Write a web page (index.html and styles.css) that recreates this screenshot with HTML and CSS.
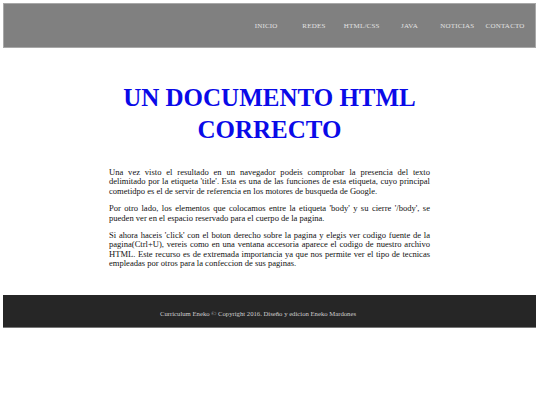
FILE: index.html
```html
<!DOCTYPE html>
<html lang="es">
<head>
<meta charset="utf-8">
<title>Curriculum Eneko</title>
<link rel="stylesheet" href="styles.css">
</head>
<body>
<header class="top">
  <nav class="menu">
    <a class="menu-item" href="#">INICIO</a>
    <a class="menu-item" href="#">REDES</a>
    <a class="menu-item" href="#">HTML/CSS</a>
    <a class="menu-item" href="#">JAVA</a>
    <a class="menu-item" href="#">NOTICIAS</a>
    <a class="menu-item" href="#">CONTACTO</a>
  </nav>
</header>
<main class="content">
  <h1 class="title">UN DOCUMENTO HTML<br>CORRECTO</h1>
  <p class="text">Una vez visto el resultado en un navegador podeis comprobar la presencia del texto delimitado por la etiqueta 'title'. Esta es una de las funciones de esta etiqueta, cuyo principal cometidpo es el de servir de referencia en los motores de busqueda de Google.</p>
  <p class="text">Por otro lado, los elementos que colocamos entre la etiqueta 'body' y su cierre '/body', se pueden ver en el espacio reservado para el cuerpo de la pagina.</p>
  <p class="text">Si ahora haceis 'click' con el boton derecho sobre la pagina y elegis ver codigo fuente de la pagina(Ctrl+U), vereis como en una ventana accesoria aparece el codigo de nuestro archivo HTML. Este recurso es de extremada importancia ya que nos permite ver el tipo de tecnicas empleadas por otros para la confeccion de sus paginas.</p>
</main>
<footer class="bottom">
  <p class="copy">Curriculum Eneko © Copyright 2016. Diseño y edicion Eneko Mardones</p>
</footer>
</body>
</html>
```

FILE: styles.css
```css
html, body {
  background: #ffffff;
}
body {
  margin: 3px 4px 0 3px;
  font-family: "Liberation Serif", "Times New Roman", serif;
  color: #111;
}
.top {
  height: 43px;
  background: #808080;
  border: 1px solid #a8a8a8;
  display: flex;
  align-items: center;
  justify-content: flex-end;
  padding-right: 6px;
}
.menu {
  display: flex;
}
.menu-item {
  width: 47.8px;
  text-align: center;
  color: #e2e2e2;
  text-decoration: none;
  font-size: 7px;
  letter-spacing: 0.2px;
  white-space: nowrap;
}
.content {
  width: 321px;
  margin: 0 auto;
  padding: 34px 0 18px;
}
.title {
  margin: 0 -60px 22px;
  text-align: center;
  color: #0a0ae8;
  font-size: 25px;
  line-height: 32px;
  font-weight: bold;
}
.text {
  margin: 0 0 8px;
  font-size: 8.55px;
  line-height: 9.4px;
  text-align: justify;
}
.bottom {
  height: 32px;
  background: #262626;
  border-bottom: 1px solid #777;
  display: flex;
  align-items: center;
  justify-content: center;
  padding: 0 23px 0 0;
}
.copy {
  margin: 6px 0 0;
  color: #cfcfcf;
  font-size: 6.7px;
}
```
